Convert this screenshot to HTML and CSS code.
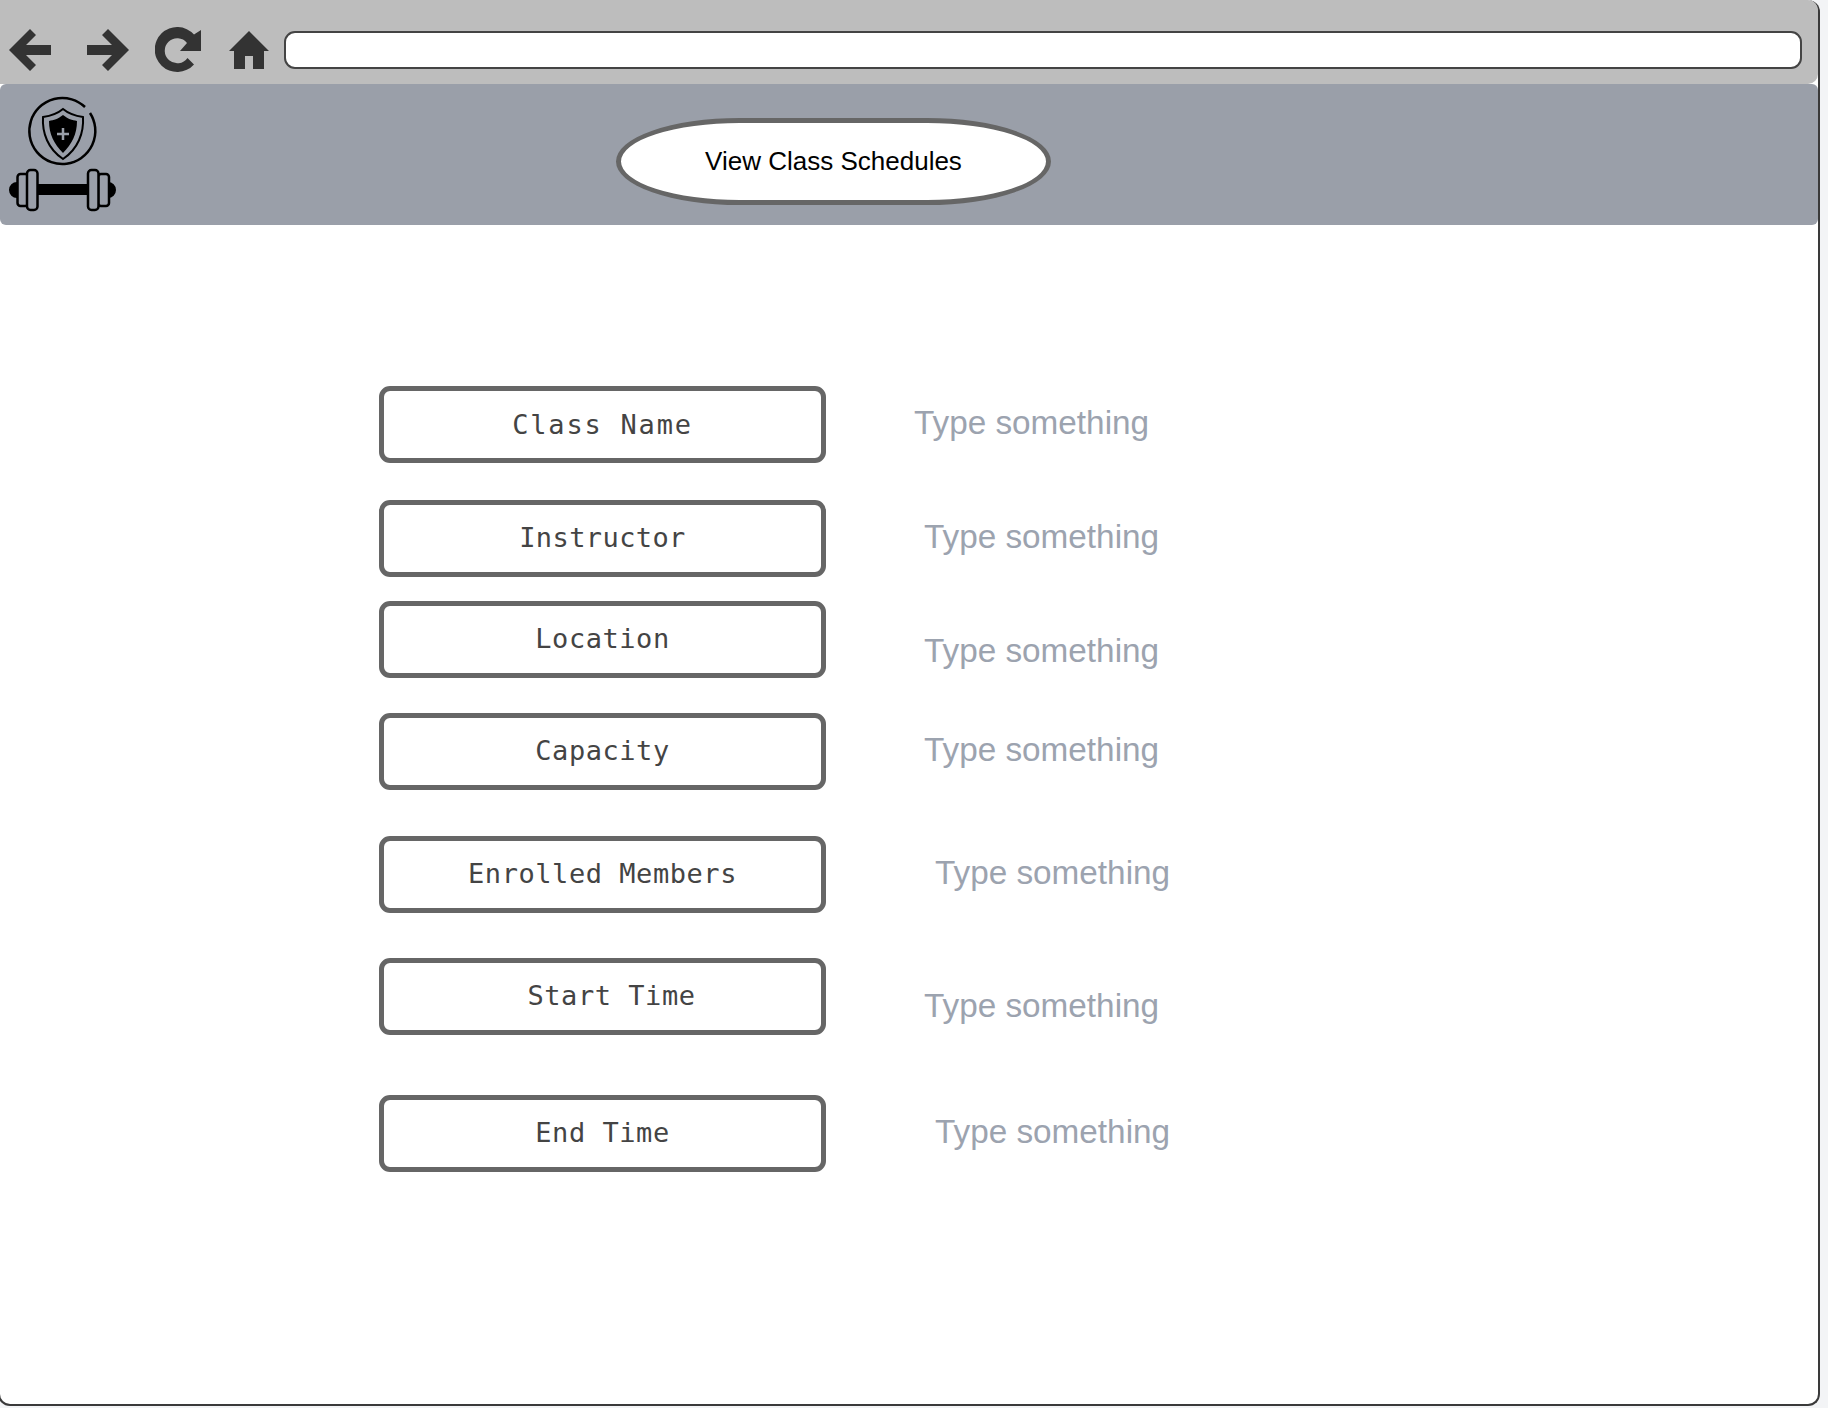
FILE: index.html
```html
<!DOCTYPE html>
<html lang="en">
<head>
<meta charset="utf-8">
<title>Edit Class</title>
<link rel="stylesheet" href="styles.css">
</head>
<body>
<div class="window">
  <div class="toolbar">
    <svg class="nav-icon icon-back" viewBox="0 0 42 42"><path d="M21 0l6 6-10 10h25v10H17l10 10-6 6L0 21z"/></svg>
    <svg class="nav-icon icon-forward" viewBox="0 0 42 42"><path d="M21 0l-6 6 10 10H0v10h25L15 36l6 6 21-21z"/></svg>
    <svg class="nav-icon icon-reload" viewBox="0 0 46 46"><path d="M46 3V24H25L32 16A12.500 12.500 0 1 0 32.500 31L39 37.500A22.500 22.500 0 1 1 39 7.500Z"/></svg>
    <svg class="nav-icon icon-home" viewBox="0 0 40 38"><path d="M20 0l20 20h-5v18H24V25h-8v13H5V20H0z"/></svg>
    <div class="address"></div>
  </div>
  <header class="appbar">
    <svg class="logo" viewBox="0 0 120 132">
      <path class="line" d="M85 17A33 33 0 1 0 90 23"/>
      <path class="line-thin" d="M63 19c6 5 13 7 20 8 1 16-5 32-20 42C48 59 42 43 43 27c7-1 14-3 20-8z"/>
      <path class="solid" d="M63 25c5 4 9 5 14 6 0 13-5 23-14 32-9-9-14-19-14-32 5-1 9-2 14-6z"/>
      <path class="cross" d="M63 38v12M57 44h12"/>
      <path class="solid" d="M37 94h52v11H37zM17 92v16a8 8 0 0 1 0-16zM108 92a8 8 0 0 1 0 16z"/>
      <rect class="plate" x="17.500" y="84" width="11" height="32" rx="3"/>
      <rect class="plate" x="27" y="80" width="10.500" height="40" rx="3.500"/>
      <rect class="plate" x="98" y="84" width="11" height="32" rx="3"/>
      <rect class="plate" x="88" y="80" width="10.500" height="40" rx="3.500"/>
    </svg>
    <button class="schedule-btn" type="button">View Class Schedules</button>
  </header>
  <main class="form">
    <div class="labels">
      <div class="label ls-wide">Class Name</div>
      <div class="label label-2 ls-narrow">Instructor</div>
      <div class="label label-3">Location</div>
      <div class="label label-4">Capacity</div>
      <div class="label label-5">Enrolled Members</div>
      <div class="label label-6 shift">Start Time</div>
      <div class="label label-7">End Time</div>
    </div>
    <div class="values">
      <div class="value">Type something</div>
      <div class="value value-2">Type something</div>
      <div class="value value-3">Type something</div>
      <div class="value value-4">Type something</div>
      <div class="value value-5">Type something</div>
      <div class="value value-6">Type something</div>
      <div class="value value-7">Type something</div>
    </div>
  </main>
</div>
</body>
</html>
```
FILE: styles.css
```css
* { box-sizing: border-box; }
html, body { margin: 0; height: 100%; }
body { background: #f3f4f6; overflow: hidden; font-family: "Liberation Sans", Arial, sans-serif; }
.window {
  width: 1822px;
  height: 1406px;
  margin-left: -2px;
  background: #fff;
  border: 2px solid #3a3a3a;
  border-top: 0;
  border-radius: 12px;
  display: flex;
  flex-direction: column;
}
.toolbar {
  height: 84px;
  background: #bdbdbd;
  border-radius: 0 10px 10px 0;
  display: flex;
  align-items: flex-start;
  flex: none;
}
.nav-icon { fill: #333; flex: none; }
.icon-back { width: 42px; height: 42px; margin: 29px 0 0 9px; }
.icon-forward { width: 42px; height: 42px; margin: 29px 0 0 36px; }
.icon-reload { width: 46px; height: 46px; margin: 27px 0 0 26px; }
.icon-home { width: 40px; height: 38px; margin: 31px 0 0 28px; }
.address {
  width: 1518px;
  height: 38px;
  margin: 31px 0 0 15px;
  background: #fff;
  border: 2px solid #444;
  border-radius: 11px;
}
.appbar {
  height: 141px;
  flex: none;
  background: #9a9fa9;
  border-radius: 6px;
  display: flex;
  align-items: flex-start;
}
.logo { width: 120px; height: 132px; margin-top: 6px; flex: none; }
.logo .line { fill: none; stroke: #000; stroke-width: 2.500; }
.logo .line-thin { fill: none; stroke: #000; stroke-width: 2; }
.logo .solid { fill: #000; }
.logo .cross { fill: none; stroke: #9a9fa9; stroke-width: 2.500; }
.logo .plate { fill: #9a9fa9; stroke: #000; stroke-width: 2.500; }
.schedule-btn {
  width: 435px;
  height: 87px;
  margin: 34px 0 0 496px;
  background: #fff;
  border: 5px solid #666;
  border-radius: 125px / 44px;
  color: #000;
  font: 26px "Liberation Sans", Arial, sans-serif;
  padding: 0 0 1px;
}
.form { display: flex; padding: 161px 0 0 379px; }
.labels { width: 447px; display: flex; flex-direction: column; flex: none; }
.label {
  height: 77px;
  border: 5px solid #666;
  border-radius: 11px;
  display: flex;
  align-items: center;
  justify-content: center;
  color: #444;
  font: 27px "DejaVu Sans Mono", monospace;
  letter-spacing: .55px;
  padding-bottom: 3px;
  white-space: pre;
}
.ls-wide { letter-spacing: 1.800px; padding-bottom: 1px; }
.ls-narrow { letter-spacing: .4px; }
.label-2 { margin-top: 37px; }
.label-3 { margin-top: 24px; }
.label-4 { margin-top: 35px; }
.label-5 { margin-top: 46px; }
.label-6 { margin-top: 45px; }
.label-7 { margin-top: 60px; }
.shift { padding-left: 18px; }
.values { display: flex; flex-direction: column; margin-left: 88px; }
.value { color: #9ca3af; font-size: 33.300px; line-height: 40px; margin-top: 17px; white-space: nowrap; }
.value-2 { margin-top: 74px; margin-left: 10px; }
.value-3 { margin-top: 74px; margin-left: 10px; }
.value-4 { margin-top: 59px; margin-left: 10px; }
.value-5 { margin-top: 83px; margin-left: 21px; }
.value-6 { margin-top: 93px; margin-left: 10px; }
.value-7 { margin-top: 86px; margin-left: 21px; }
```
